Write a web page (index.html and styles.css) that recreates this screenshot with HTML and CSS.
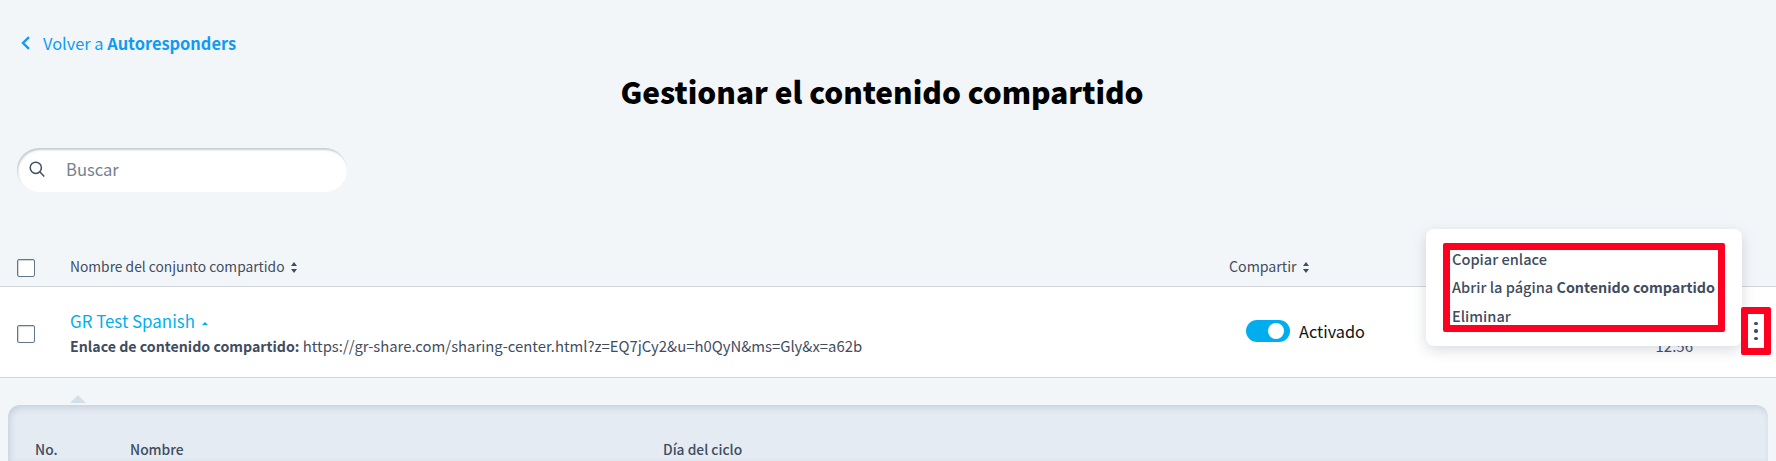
FILE: index.html
```html
<!DOCTYPE html>
<html lang="es">
<head>
    <meta charset="UTF-8">
    <title>Gestionar el contenido compartido</title>
    <link rel="stylesheet" href="styles.css">
</head>
<body>
    <a class="back-link" href="#">
        <svg class="back-icon" viewBox="0 0 9 14" width="9" height="14"><path d="M8 1.2 2 7l6 5.8" fill="none" stroke="currentColor" stroke-width="2.4"/></svg>
        <span>Volver a <b>Autoresponders</b></span>
    </a>

    <h1>Gestionar el contenido compartido</h1>

    <div class="search">
        <svg viewBox="0 0 16 16" width="16" height="16"><circle cx="6.8" cy="6.8" r="5.6" fill="none" stroke="#3f4d5f" stroke-width="1.5"/><path d="m10.8 10.8 4.4 4.6" fill="none" stroke="#3f4d5f" stroke-width="1.5"/></svg>
        <span>Buscar</span>
    </div>

    <!-- cabecera de la tabla -->
    <div class="table-row table-head">
        <span class="checkbox"></span>
        <div class="col-name">Nombre del conjunto compartido <i class="sort"></i></div>
        <div class="col-share">Compartir <i class="sort"></i></div>
    </div>

    <!-- fila -->
    <div class="table-row table-item">
        <span class="checkbox"></span>
        <div class="col-name">
            <a class="item-title" href="#">GR Test Spanish <i class="caret-up"></i></a>
            <p class="item-url"><b>Enlace de contenido compartido:</b> https://gr-share.com/sharing-center.html?z=EQ7jCy2&amp;u=h0QyN&amp;ms=Gly&amp;x=a62b</p>
        </div>
        <div class="col-toggle">
            <span class="toggle"></span>
            <span>Activado</span>
        </div>
        <div class="col-date">12:56</div>
    </div>

    <!-- menu sobre la fila -->
    <div class="menu">
        <ul class="menu-list">
            <li>Copiar enlace</li>
            <li>Abrir la página <b>Contenido compartido</b></li>
            <li>Eliminar</li>
        </ul>
    </div>
    <div class="dots-box"><i></i><i></i><i></i></div>

    <div class="panel-arrow"></div>
    <div class="panel">
        <span class="panel-no">No.</span>
        <span class="panel-name">Nombre</span>
        <span>Día del ciclo</span>
    </div>
</body>
</html>
```

FILE: styles.css
```css
/* layout general */
html, body {
    height: 100%;
    overflow: hidden;
}

body {
    margin: 0;
    position: relative;
    background-color: #f3f6f9;
    color: #3f4d5f;
    font-family: "Noto Sans CJK SC", "Noto Sans", sans-serif;
    font-size: 15px;
}

/* volver */
.back-link {
    display: flex;
    align-items: center;
    gap: 13px;
    height: 20px;
    margin: 33px 0 0 21px;
    color: #0f9bf5;
    font-size: 16.4px;
    text-decoration: none;
}

.back-link b {
    font-weight: 700;
}

h1 {
    margin: 18px 0 0;
    padding-right: 12px;
    height: 40px;
    line-height: 40px;
    text-align: center;
    color: #000;
    font-size: 29.8px;
    font-weight: 900;
}

/* buscador */
.search {
    display: flex;
    align-items: center;
    gap: 21px;
    box-sizing: border-box;
    width: 330px;
    height: 44px;
    margin: 37px 0 0 17px;
    padding: 0 0 2px 12px;
    background-color: #fff;
    border-radius: 22px;
    box-shadow: inset 1px 2px 2px rgba(90, 110, 135, 0.35);
    color: #73828f;
    font-size: 16.6px;
}

/* tabla */
.table-row {
    display: flex;
    align-items: center;
    box-sizing: border-box;
    padding-left: 17px;
    border-bottom: 1px solid #d2d5d9;
}

.table-head {
    height: 37px;
    margin-top: 58px;
    padding-bottom: 4px;
    font-size: 13.8px;
}

.table-item {
    height: 91px;
    background-color: #fff;
    position: relative;
}

.checkbox {
    box-sizing: border-box;
    flex: 0 0 18px;
    height: 18px;
    background-color: #fff;
    border: 1px solid #63778c;
    border-radius: 2px;
    box-shadow: inset 1px 1px 1px rgba(90, 110, 135, 0.3);
}

.table-head .checkbox {
    margin-top: 4px;
}

.table-item .checkbox {
    margin-top: 4px;
}

.col-name {
    margin-left: 35px;
    flex: 0 0 1159px;
}

.col-share {
    flex: none;
    font-size: 14.2px;
}

.sort {
    display: inline-block;
    width: 7px;
    height: 11px;
    margin-left: 3px;
    vertical-align: -1px;
    position: relative;
}

.sort::before,
.sort::after {
    content: "";
    position: absolute;
    left: 0;
    border-left: 3.5px solid transparent;
    border-right: 3.5px solid transparent;
}

.sort::before {
    top: 0;
    border-bottom: 4px solid #3f4d5f;
}

.sort::after {
    bottom: 0;
    border-top: 4px solid #3f4d5f;
}

.item-title {
    display: block;
    color: #00aeef;
    font-size: 16.9px;
    line-height: 24px;
    text-decoration: none;
}

.caret-up {
    display: inline-block;
    margin: 0 0 3px 3px;
    border-left: 3px solid transparent;
    border-right: 3px solid transparent;
    border-bottom: 3px solid #00aeef;
}

.item-url {
    margin: 3px 0 0;
    line-height: 20px;
    font-size: 14.85px;
}

.item-url b {
    font-size: 14.2px;
}

.col-toggle {
    display: flex;
    align-items: center;
    gap: 9px;
    margin-left: 17px;
    margin-bottom: 3px;
    color: #111;
    font-size: 16.3px;
}

.toggle {
    width: 44px;
    height: 22px;
    border-radius: 11px;
    background-color: #00aeef;
    position: relative;
}

.toggle::after {
    content: "";
    position: absolute;
    right: 6px;
    top: 3px;
    width: 16px;
    height: 16px;
    border-radius: 50%;
    background-color: #fff;
}

.col-date {
    margin-left: auto;
    margin-right: 83px;
    margin-top: 26px;
    font-size: 15px;
}

/* menu */
.menu {
    position: absolute;
    left: 1426px;
    top: 229px;
    box-sizing: border-box;
    width: 316px;
    height: 117px;
    padding: 14px 17px;
    background-color: #fff;
    border-radius: 8px;
    box-shadow: 0 4px 14px rgba(60, 80, 105, 0.2);
}

.menu-list {
    box-sizing: border-box;
    height: 89px;
    margin: 0;
    padding: 0 2px;
    list-style: none;
    border: 7px solid #ff0020;
    border-radius: 2px;
    font-size: 14.6px;
    font-weight: 500;
    line-height: 28.5px;
    white-space: nowrap;
}

.menu-list li:first-child {
    margin-top: -5.5px;
}

.menu-list b {
    font-size: 14.3px;
    font-weight: 700;
}

.dots-box {
    position: absolute;
    left: 1741px;
    top: 307px;
    box-sizing: border-box;
    width: 30px;
    height: 48px;
    display: flex;
    flex-direction: column;
    align-items: center;
    justify-content: center;
    gap: 4px;
    background-color: #fff;
    border: 7px solid #ff0020;
    border-radius: 2px;
}

.dots-box i {
    width: 3.5px;
    height: 3.5px;
    border-radius: 50%;
    background-color: #3f4d5f;
}

/* panel inferior */
.panel-arrow {
    width: 0;
    margin: 17px 0 0 70px;
    border-left: 8px solid transparent;
    border-right: 8px solid transparent;
    border-bottom: 8px solid #d5dfe8;
}

.panel {
    display: flex;
    box-sizing: border-box;
    margin: 2px 8px 0;
    height: 56px;
    padding: 34px 0 0 27px;
    background-color: #e4ebf3;
    border-radius: 12px 12px 0 0;
    box-shadow: inset 2px 3px 6px rgba(90, 110, 135, 0.2);
    font-size: 13.8px;
    font-weight: 500;
    line-height: 20px;
}

.panel-no {
    width: 95px;
}

.panel-name {
    width: 533px;
}
```
